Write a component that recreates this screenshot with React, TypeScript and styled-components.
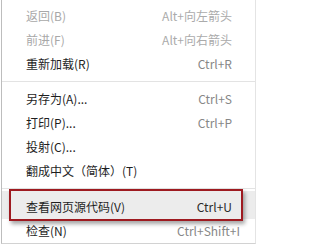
import React from "react";
import styled, { createGlobalStyle } from "styled-components";

const Global = createGlobalStyle`
  html, body { margin: 0; padding: 0; background: #ffffff; }
  body { font-family: "Noto Sans CJK SC", "Noto Sans", sans-serif; }
`;

const Menu = styled.div`
  position: relative;
  box-sizing: border-box;
  margin-left: 1px;
  width: 255px;
  height: 244px;
  padding-top: 4px;
  background: #ffffff;
  border-left: 1px solid #bdbdbd;
  border-right: 1px solid #e4e4e4;
  border-bottom: 1px solid #d2d2d2;
`;

const Item = styled.div<{ $disabled?: boolean; $active?: boolean; $padRight?: number }>`
  display: flex;
  align-items: center;
  justify-content: space-between;
  height: 24px;
  padding: 0 ${(p) => p.$padRight ?? 23}px 0 24px;
  font-size: 12px;
  line-height: 24px;
  color: ${(p) => (p.$disabled ? "#a8a8a8" : "#1e1e1e")};
  background: ${(p) => (p.$active ? "#ececec" : "transparent")};
  box-shadow: ${(p) => (p.$active ? "0 -4px 0 #ececec" : "none")};
`;

const Label = styled.span`
  white-space: nowrap;
`;

const Shortcut = styled.span<{ $disabled?: boolean; $active?: boolean }>`
  white-space: nowrap;
  color: ${(p) => (p.$disabled ? "#ababab" : p.$active ? "#2a2a2a" : "#878787")};
`;

const Separator = styled.div<{ $h: number; $top: number }>`
  height: ${(p) => p.$h}px;
  box-sizing: border-box;
  padding-top: ${(p) => p.$top}px;
  &::after {
    content: "";
    display: block;
    height: 1px;
    background: #e3e3e3;
  }
`;

const Highlight = styled.div`
  position: absolute;
  left: 7px;
  top: 189px;
  width: 234px;
  height: 32px;
  box-sizing: border-box;
  border: 2px solid #9e1a20;
  background: transparent;
  box-shadow: 2px 3px 4px rgba(0, 0, 0, 0.35);
  pointer-events: none;
  z-index: 2;
`;

type Row = { label: string; shortcut?: string; disabled?: boolean; active?: boolean; padRight?: number };

const group1: Row[] = [
  { label: "返回(B)", shortcut: "Alt+向左箭头", disabled: true },
  { label: "前进(F)", shortcut: "Alt+向右箭头", disabled: true },
  { label: "重新加载(R)", shortcut: "Ctrl+R" },
];
const group2: Row[] = [
  { label: "另存为(A)...", shortcut: "Ctrl+S" },
  { label: "打印(P)...", shortcut: "Ctrl+P" },
  { label: "投射(C)..." },
  { label: "翻成中文（简体）(T)" },
];
const group3: Row[] = [
  { label: "查看网页源代码(V)", shortcut: "Ctrl+U", active: true },
  { label: "检查(N)", shortcut: "Ctrl+Shift+I", padRight: 15 },
];

const renderRows = (rows: Row[]) =>
  rows.map((r) => (
    <Item key={r.label} $disabled={r.disabled} $active={r.active} $padRight={r.padRight}>
      <Label>{r.label}</Label>
      {r.shortcut && (
        <Shortcut $disabled={r.disabled} $active={r.active}>
          {r.shortcut}
        </Shortcut>
      )}
    </Item>
  ));

export default function App() {
  return (
    <>
      <Global />
      <Menu>
        {renderRows(group1)}
        <Separator $h={11} $top={5} />
        {renderRows(group2)}
        <Separator $h={12} $top={5} />
        {renderRows(group3)}
        <Highlight />
      </Menu>
    </>
  );
}
